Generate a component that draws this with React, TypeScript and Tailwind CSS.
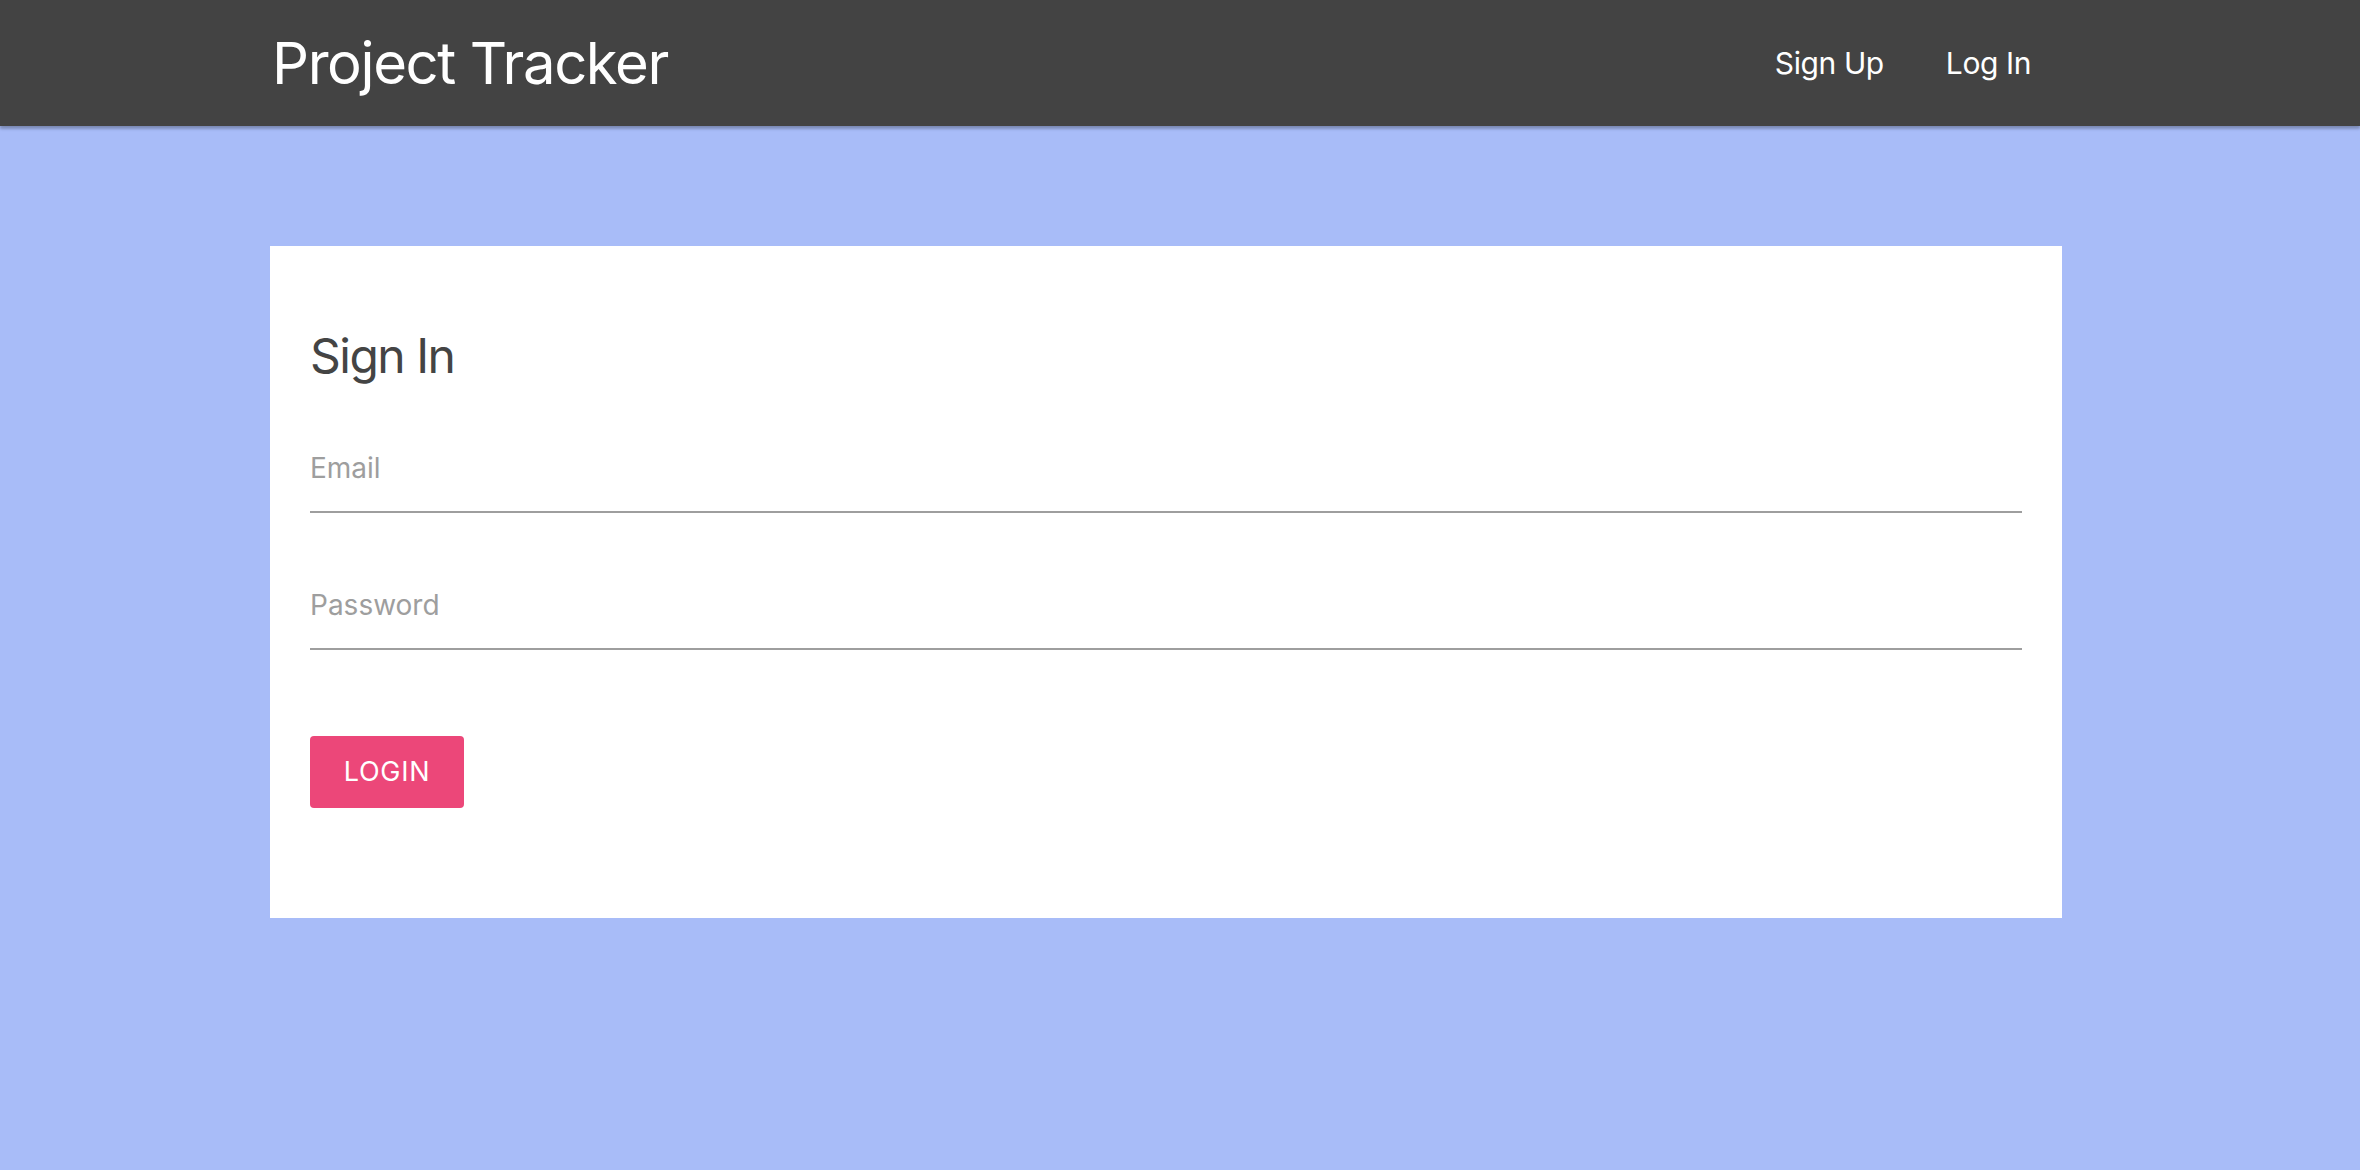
import React from 'react';

export default function App() {
  return (
    <div className="min-h-screen bg-[#a8bcf8] font-['Inter','Liberation_Sans',sans-serif]">
      {/* Navbar */}
      <nav className="h-[126px] bg-[#434343] shadow-[0_2px_4px_rgba(0,0,0,0.2),0_3px_2px_rgba(0,0,0,0.12)]">
        <div className="ml-[270px] w-[1792px] h-full flex items-center justify-between">
          <a href="#" className="text-white text-[58px] leading-none tracking-[-1.4px] pl-[2px]">
            Project Tracker
          </a>
          <ul className="flex items-center h-full">
            <li>
              <a href="#" className="block px-[31px] text-white text-[30px] tracking-[-0.4px]">
                Sign Up
              </a>
            </li>
            <li>
              <a href="#" className="block px-[31px] text-white text-[30px] tracking-[-0.4px]">
                Log In
              </a>
            </li>
          </ul>
        </div>
      </nav>

      {/* Sign in card */}
      <div className="ml-[270px] w-[1792px] mt-[120px] bg-white px-[40px] pt-[86px] pb-[110px]">
        <h2 className="text-[48px] leading-[48px] tracking-[-1.5px] text-[#444444]">Sign In</h2>
        <form className="mt-[45px]" onSubmit={(e) => e.preventDefault()}>
          <input
            type="email"
            placeholder="Email"
            className="block w-full h-[88px] border-b-2 border-[#9e9e9e] bg-transparent text-[28px] text-[#444] placeholder:text-[#9e9e9e] outline-none"
          />
          <input
            type="password"
            placeholder="Password"
            className="block w-full h-[88px] mt-[49px] border-b-2 border-[#9e9e9e] bg-transparent text-[28px] text-[#444] placeholder:text-[#9e9e9e] outline-none"
          />
          <button
            type="submit"
            className="mt-[86px] w-[154px] h-[72px] rounded-[4px] bg-[#ec4779] text-white text-[27px] tracking-[0.7px] uppercase"
          >
            Login
          </button>
        </form>
      </div>
    </div>
  );
}
